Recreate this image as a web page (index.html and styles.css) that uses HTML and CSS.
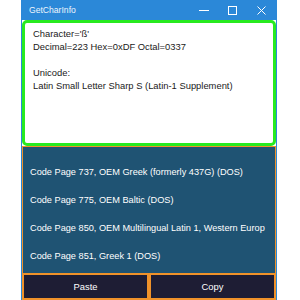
FILE: index.html
```
<!DOCTYPE html>
<html lang="en">
<head>
    <meta charset="UTF-8">
    <title>GetCharInfo</title>
    <link rel="stylesheet" href="styles.css">
</head>
<body>
    <div class="window">
        <header class="titlebar">
            <span class="title">GetCharInfo</span>
            <div class="caption-buttons">
                <span class="cap">
                    <svg width="10" height="10" viewBox="0 0 10 10"><path d="M0 5.5h10" stroke="#fff" stroke-width="1"/></svg>
                </span>
                <span class="cap">
                    <svg width="9" height="9" viewBox="0 0 9 9"><rect x="0.5" y="0.5" width="8" height="8" fill="none" stroke="#fff" stroke-width="1"/></svg>
                </span>
                <span class="cap">
                    <svg width="9" height="9" viewBox="0 0 9 9"><path d="M0.5 0.5l8 8M8.5 0.5l-8 8" stroke="#fff" stroke-width="1"/></svg>
                </span>
            </div>
        </header>
        <div class="info-box">
            <div>Character='ß'</div>
            <div>Decimal=223 Hex=0xDF Octal=0337</div>
            <div>&nbsp;</div>
            <div>Unicode:</div>
            <div>Latin Small Letter Sharp S (Latin-1 Supplement)</div>
        </div>
        <div class="code-pages">
            <div class="page-item">Code Page 737, OEM Greek (formerly 437G) (DOS)</div>
            <div class="page-item">Code Page 775, OEM Baltic (DOS)</div>
            <div class="page-item">Code Page 850, OEM Multilingual Latin 1, Western Europ</div>
            <div class="page-item">Code Page 851, Greek 1 (DOS)</div>
        </div>
        <div class="actions">
            <button class="action-btn">Paste</button>
            <button class="action-btn">Copy</button>
        </div>
    </div>
</body>
</html>
```

FILE: styles.css
```
body {
    margin: 0;
    padding: 0;
    background: #fff;
    font-family: "Liberation Sans", Arial, sans-serif;
}
.window {
    margin-left: 21px;
    width: 256px;
    height: 300px;
    box-sizing: border-box;
    border-left: 1px solid #2b88d8;
    border-right: 1px solid #2b88d8;
    display: flex;
    flex-direction: column;
    background: #fff;
}
.titlebar {
    height: 20px;
    flex: none;
    background: #2b88d8;
    color: #fff;
    display: flex;
    align-items: center;
    justify-content: space-between;
    padding-left: 7px;
}
.title {
    font-size: 8.6px;
    line-height: 20px;
    color: #eef5fc;
}
.caption-buttons {
    display: flex;
    height: 20px;
}
.cap {
    width: 29px;
    display: flex;
    align-items: center;
    justify-content: center;
}
.cap svg {
    display: block;
}
.info-box {
    height: 126px;
    flex: none;
    box-sizing: border-box;
    border: 3px solid #27ea1f;
    border-radius: 5px;
    padding: 4px 8px;
    font-size: 9.4px;
    line-height: 13px;
    color: #1a1a1a;
    background: #fff;
}
.code-pages {
    flex: 1;
    background: #1f5373;
    border: 1px solid #f0922a;
    border-bottom: none;
    padding-top: 11px;
    overflow: hidden;
}
.page-item {
    height: 28px;
    line-height: 28px;
    padding-left: 7px;
    font-size: 9.2px;
    color: #fff;
    white-space: nowrap;
}
.actions {
    height: 27px;
    flex: none;
    display: flex;
}
.action-btn {
    flex: 1;
    margin: 0;
    background: #1e1d34;
    color: #fff;
    border: 2px solid #f0922a;
    font-family: "Liberation Sans", Arial, sans-serif;
    font-size: 9.4px;
    padding: 0;
    cursor: pointer;
}
```
